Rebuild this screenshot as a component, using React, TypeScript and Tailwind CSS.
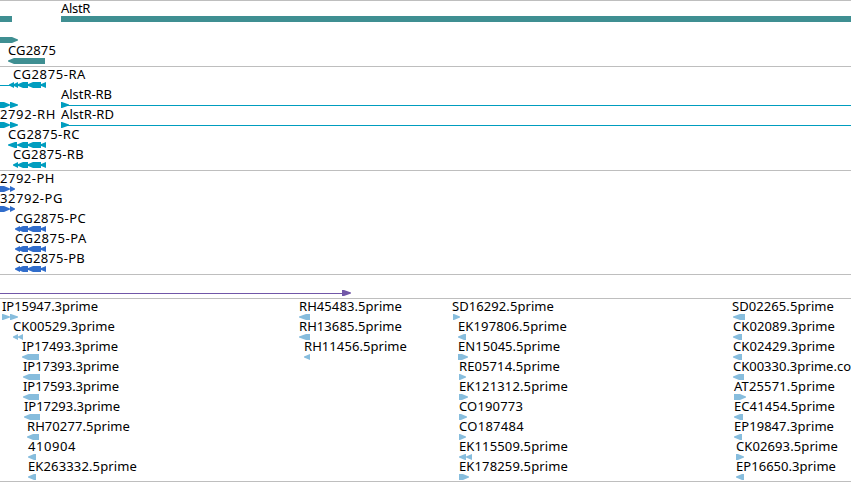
type Dir = 'left' | 'right' | 'none';

// [x, width, direction, head length]
type Block = [number, number, Dir, number?];

interface Feature {
  label?: string;
  x?: number;
  width?: number;
  blocks?: Block[];
  line?: [number, number];
}

interface Track {
  id: string;
  color: string;
  rowHeight: string;
  rows: Feature[][];
}

const GENE = '#3f8f92';
const TRANSCRIPT = '#009dbf';
const PROTEIN = '#316dcb';
const PREDICTION = '#7157a8';
const EST = '#87bddd';

const tail: Block[] = [[17, 11, 'left', 6], [27, 14, 'left', 6], [40, 6, 'left', 6]];

const tracks: Track[] = [
  {
    id: 'genes',
    color: GENE,
    rowHeight: 'h-[21px]',
    rows: [
      [
        { blocks: [[0, 12, 'none']] },
        { label: 'AlstR', x: 61, width: 29, blocks: [[61, 790, 'none']] },
      ],
      [{ blocks: [[0, 18, 'right', 6]] }],
      [{ label: 'CG2875', x: 8, width: 48, blocks: [[8, 37, 'left', 6]] }],
    ],
  },
  {
    id: 'transcripts',
    color: TRANSCRIPT,
    rowHeight: 'h-5',
    rows: [
      [{ label: 'CG2875-RA', x: 13, width: 73, line: [0, 10], blocks: [[9, 5, 'left', 5], [13, 5, 'left', 5], ...tail] }],
      [
        { blocks: [[0, 10, 'right', 6], [10, 8, 'right', 7]] },
        { label: 'AlstR-RB', x: 61, width: 51, line: [61, 851], blocks: [[61, 8, 'right', 7]] },
      ],
      [
        { label: '2792-RH', x: 0, width: 56, blocks: [[0, 10, 'right', 6], [10, 8, 'right', 7]] },
        { label: 'AlstR-RD', x: 61, width: 53, line: [61, 851], blocks: [[61, 8, 'right', 7]] },
      ],
      [{ label: 'CG2875-RC', x: 8, width: 72, blocks: [[8, 9, 'left', 7], ...tail] }],
      [{ label: 'CG2875-RB', x: 13, width: 71, blocks: [[13, 5, 'left', 5], ...tail] }],
    ],
  },
  {
    id: 'proteins',
    color: PROTEIN,
    rowHeight: 'h-5',
    rows: [
      [{ label: '2792-PH', x: 0, width: 55, blocks: [[0, 10, 'right', 6], [10, 5, 'right', 5]] }],
      [{ label: '32792-PG', x: 0, width: 63, blocks: [[0, 10, 'right', 6], [10, 5, 'right', 5]] }],
      [{ label: 'CG2875-PC', x: 15, width: 71, blocks: [[15, 5, 'left', 5], ...tail] }],
      [{ label: 'CG2875-PA', x: 15, width: 72, blocks: [[15, 5, 'left', 5], ...tail] }],
      [{ label: 'CG2875-PB', x: 15, width: 70, blocks: [[15, 5, 'left', 5], ...tail] }],
    ],
  },
  {
    id: 'predictions',
    color: PREDICTION,
    rowHeight: 'h-5',
    rows: [[{ line: [0, 342], blocks: [[342, 9, 'right', 7]] }]],
  },
  {
    id: 'ests',
    color: EST,
    rowHeight: 'h-5',
    rows: [
      [
        { label: 'IP15947.3prime', x: 2, width: 96, blocks: [[2, 8, 'right', 7], [10, 8, 'right', 7]] },
        { label: 'RH45483.5prime', x: 299, width: 103, blocks: [[299, 11, 'left', 7]] },
        { label: 'SD16292.5prime', x: 452, width: 102, blocks: [[453, 7, 'right', 6]] },
        { label: 'SD02265.5prime', x: 732, width: 102, blocks: [[733, 12, 'left', 7]] },
      ],
      [
        { label: 'CK00529.3prime', x: 13, width: 102, blocks: [[13, 5, 'left', 5], [18, 5, 'left', 5]] },
        { label: 'RH13685.5prime', x: 299, width: 103, blocks: [[299, 11, 'left', 7]] },
        { label: 'EK197806.5prime', x: 458, width: 109, blocks: [[458, 8, 'left', 6]] },
        { label: 'CK02089.3prime', x: 733, width: 102, blocks: [[733, 9, 'left', 6]] },
      ],
      [
        { label: 'IP17493.3prime', x: 22, width: 96, blocks: [[22, 17, 'left', 6]] },
        { label: 'RH11456.5prime', x: 304, width: 103, blocks: [[304, 6, 'left', 6]] },
        { label: 'EN15045.5prime', x: 458, width: 102, blocks: [[458, 10, 'right', 6]] },
        { label: 'CK02429.3prime', x: 733, width: 102, blocks: [[733, 9, 'left', 6]] },
      ],
      [
        { label: 'IP17393.3prime', x: 23, width: 96, blocks: [[23, 17, 'left', 6]] },
        { label: 'RE05714.5prime', x: 459, width: 101, blocks: [[459, 7, 'right', 6]] },
        { label: 'CK00330.3prime.co', x: 733, width: 118, blocks: [[733, 11, 'left', 6]] },
      ],
      [
        { label: 'IP17593.3prime', x: 23, width: 96, blocks: [[23, 16, 'left', 6]] },
        { label: 'EK121312.5prime', x: 459, width: 109, blocks: [[459, 9, 'right', 6]] },
        { label: 'AT25571.5prime', x: 734, width: 101, blocks: [[734, 12, 'right', 6]] },
      ],
      [
        { label: 'IP17293.3prime', x: 24, width: 96, blocks: [[24, 16, 'left', 6]] },
        { label: 'CO190773', x: 459, width: 64, blocks: [[459, 8, 'right', 6]] },
        { label: 'EC41454.5prime', x: 734, width: 101, blocks: [[734, 9, 'left', 6]] },
      ],
      [
        { label: 'RH70277.5prime', x: 27, width: 103, blocks: [[27, 12, 'left', 6]] },
        { label: 'CO187484', x: 459, width: 65, blocks: [[459, 7, 'right', 6]] },
        { label: 'EP19847.3prime', x: 734, width: 100, blocks: [[734, 8, 'left', 6]] },
      ],
      [
        { label: '410904', x: 28, width: 48, blocks: [[28, 8, 'left', 6]] },
        { label: 'EK115509.5prime', x: 459, width: 109, blocks: [[459, 7, 'left', 6], [466, 6, 'left', 6]] },
        { label: 'CK02693.5prime', x: 736, width: 102, blocks: [[736, 8, 'right', 6]] },
      ],
      [
        { label: 'EK263332.5prime', x: 28, width: 109, blocks: [[28, 8, 'left', 6]] },
        { label: 'EK178259.5prime', x: 459, width: 109, blocks: [[459, 10, 'right', 6]] },
        { label: 'EP16650.3prime', x: 736, width: 100, blocks: [[736, 8, 'left', 6]] },
      ],
    ],
  },
];

// heads are blunt, about one pixel tall at the tip
function blockPath([x, w, dir, head = 0]: Block) {
  const end = x + w;
  if (dir === 'left') {
    return `M${x} 2.4L${x + head} 0H${end}V6H${x + head}L${x} 3.6Z`;
  }
  if (dir === 'right') {
    return `M${x} 0H${end - head}L${end} 2.4V3.6L${end - head} 6H${x}Z`;
  }
  return `M${x} 0H${end}V6H${x}Z`;
}

const ctx = document.createElement('canvas').getContext('2d')!;
ctx.font = '13px "Noto Sans"';

// letter spacing that makes a label span its width on the map
function fit(label: string, width: number) {
  return (width - ctx.measureText(label).width) / label.length;
}

function TrackRow({ features, color, height }: { features: Feature[]; color: string; height: string }) {
  return (
    <div className={`relative w-full ${height}`}>
      {features.map((f, i) =>
        f.label ? (
          <span
            key={i}
            className="absolute -top-[3px] text-[13px] leading-4 whitespace-pre text-black"
            style={{ left: f.x, letterSpacing: fit(f.label, f.width ?? 0) }}
          >
            {f.label}
          </span>
        ) : null
      )}
      <svg className="absolute left-0 top-[13px]" width="851" height="6" viewBox="0 0 851 6">
        {features.map((f, i) => (
          <g key={i} fill={color}>
            {f.line && <rect x={f.line[0]} y="3" width={f.line[1] - f.line[0]} height="1" />}
            {f.blocks?.map((b) => (
              <path key={b[0]} d={blockPath(b)} />
            ))}
          </g>
        ))}
      </svg>
    </div>
  );
}

export default function App() {
  return (
    <main className="h-[482px] w-[851px] overflow-hidden border-b border-[#bebebe] bg-white font-['Noto_Sans',sans-serif]">
      {tracks.map((track) => (
        <section key={track.id} className="border-t border-[#bebebe] pt-0.5 not-first:not-last:pb-px">
          {track.rows.map((row, i) => (
            <TrackRow key={i} features={row} color={track.color} height={track.rowHeight} />
          ))}
        </section>
      ))}
    </main>
  );
}
